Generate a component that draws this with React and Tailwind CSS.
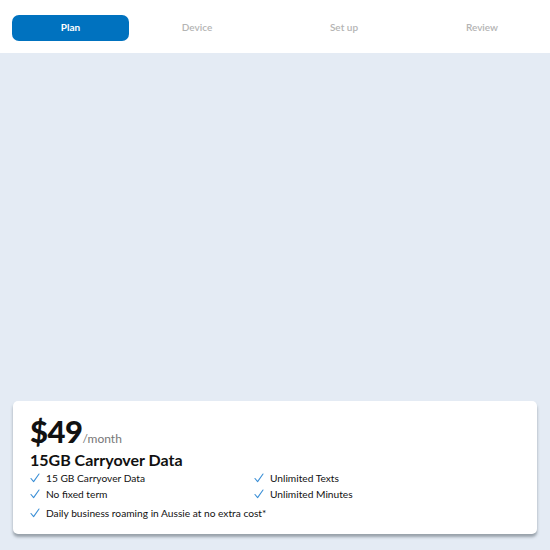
const Check = () => (
  <svg width="10" height="10" viewBox="0 0 10 10" fill="none" stroke="#3b8fd6" strokeWidth="1.1" strokeLinecap="round" strokeLinejoin="round" className="shrink-0">
    <path d="M1 5.5 3.6 8.6 9 1" />
  </svg>
);

function Feature({ text }) {
  return (
    <div className="flex items-center gap-[6px] h-[16px]">
      <Check />
      <span>{text}</span>
    </div>
  );
}

export default function App() {
  return (
    <div className="w-[550px] h-[550px] overflow-hidden bg-[#e4ebf4] flex flex-col" style={{ fontFamily: 'Lato, "Open Sans", sans-serif' }}>
      {/* Steps */}
      <div className="h-[53px] bg-white flex items-center shrink-0">
        <div className="ml-[12px] mt-[2px] w-[117px] h-[26px] rounded-[7px] bg-[#0072bf] flex items-center justify-center text-white text-[10px] font-bold">
          Plan
        </div>
        <div className="ml-[11px] mt-[2px] w-[114px] text-center text-[10px] font-semibold text-[#b4b4b4]">Device</div>
        <div className="ml-[34px] mt-[2px] w-[112px] text-center text-[10px] font-semibold text-[#b4b4b4]">Set up</div>
        <div className="ml-[26px] mt-[2px] w-[112px] text-center text-[10px] font-semibold text-[#b4b4b4]">Review</div>
      </div>

      <div className="flex-1" />

      {/* Plan card */}
      <div className="mx-[13px] mb-[16px] h-[133px] bg-white rounded-[5px] shadow-[0_3px_3px_rgba(90,100,110,0.55)] px-[17px] pt-[12px] text-[#111]">
        <div className="flex items-baseline">
          <span className="text-[31px] font-black leading-[36px] tracking-[-0.5px]">$49</span>
          <span className="text-[12px] text-[#777]">/month</span>
        </div>
        <div className="text-[16px] font-bold leading-[20px] mt-[1px]">15GB Carryover Data</div>
        <div className="grid grid-cols-[224px_1fr] text-[10.2px] leading-[16px]">
          <Feature text="15 GB Carryover Data" />
          <Feature text="Unlimited Texts" />
          <Feature text="No fixed term" />
          <Feature text="Unlimited Minutes" />
        </div>
        <div className="text-[10.2px] mt-[3px] leading-[16px]">
          <Feature text="Daily business roaming in Aussie at no extra cost*" />
        </div>
      </div>
    </div>
  );
}
